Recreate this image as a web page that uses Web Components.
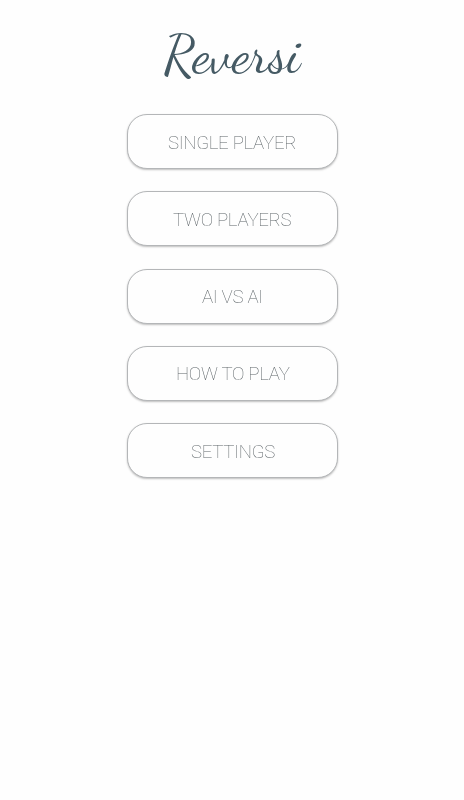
<!DOCTYPE html>
<html lang="en">
<head>
<meta charset="utf-8">
<title>Reversi</title>
<style>
html,body{margin:0;background:#fefefe;height:100%;overflow:hidden}
</style>
</head>
<body>
<reversi-menu>
  <game-title slot="title">Reversi</game-title>
  <menu-button>SINGLE PLAYER</menu-button>
  <menu-button>TWO PLAYERS</menu-button>
  <menu-button>AI VS AI</menu-button>
  <menu-button>HOW TO PLAY</menu-button>
  <menu-button>SETTINGS</menu-button>
</reversi-menu>
<script>
class GameTitle extends HTMLElement {
  constructor() {
    super();
    this.attachShadow({mode:'open'}).innerHTML = `
      <style>
        :host{display:block}
        h1{margin:0;font:400 53.7px/64px "Dancing Script",cursive;color:#455a64;white-space:nowrap}
      </style>
      <h1><slot></slot></h1>`;
  }
}
class MenuButton extends HTMLElement {
  constructor() {
    super();
    this.attachShadow({mode:'open'}).innerHTML = `
      <style>
        :host{display:block;width:211px;height:55px}
        button{display:flex;align-items:center;justify-content:center;width:100%;height:100%;margin:0;padding:2px 0 0;box-sizing:border-box;
          border:1px solid #b4b6b8;border-radius:20px;background:#fefefe;
          box-shadow:0 1px 2px rgba(0,0,0,.25);
          font:100 18.7px/22px Roboto,sans-serif;letter-spacing:-.3px;color:#4c5458}
        span{will-change:transform;opacity:.9}
      </style>
      <button type="button"><span><slot></slot></span></button>`;
  }
}
class ReversiMenu extends HTMLElement {
  constructor() {
    super();
    this.attachShadow({mode:'open'}).innerHTML = `
      <style>
        :host{display:flex;flex-direction:column;align-items:center;box-sizing:border-box;height:100%;padding-top:23px}
        header{height:91px}
        nav{display:grid;gap:22.3px;padding-left:1px}
      </style>
      <header><slot name="title"></slot></header>
      <nav><slot></slot></nav>`;
  }
}
customElements.define('game-title', GameTitle);
customElements.define('menu-button', MenuButton);
customElements.define('reversi-menu', ReversiMenu);
</script>
</body>
</html>
